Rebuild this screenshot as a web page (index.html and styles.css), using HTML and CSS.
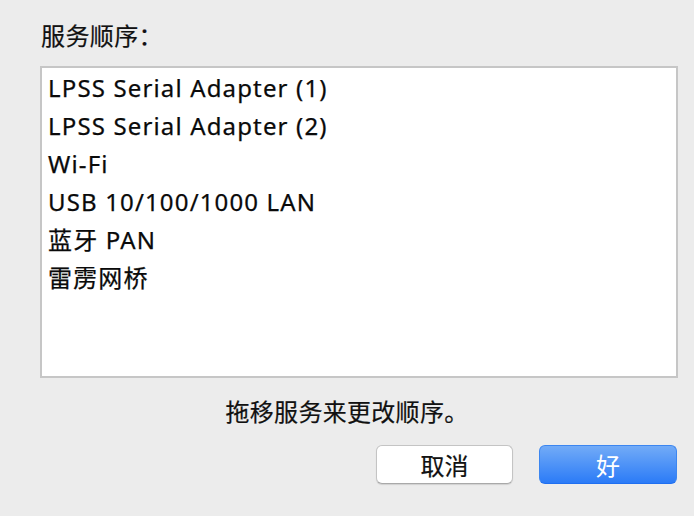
FILE: index.html
```html
<!DOCTYPE html>
<html lang="zh-CN">
<head>
<meta charset="utf-8">
<title>服务顺序</title>
<link rel="stylesheet" href="styles.css">
</head>
<body>
<div class="dialog">
  <div class="title">服务顺序：</div>
  <ul class="list">
    <li>LPSS Serial Adapter (1)</li>
    <li>LPSS Serial Adapter (2)</li>
    <li>Wi-Fi</li>
    <li>USB 10/100/1000 LAN</li>
    <li>蓝牙 PAN</li>
    <li>雷雳网桥</li>
  </ul>
  <div class="hint">拖移服务来更改顺序。</div>
  <div class="buttons">
    <button class="btn btn-cancel">取消</button>
    <button class="btn btn-ok">好</button>
  </div>
</div>
</body>
</html>
```

FILE: styles.css
```css
html, body {
  margin: 0;
  padding: 0;
  background: #ececec;
}
body {
  width: 694px;
  height: 516px;
  overflow: hidden;
  font-family: "Noto Sans", "Noto Sans CJK SC", sans-serif;
  color: #111;
}
.dialog {
  padding: 24px 16px 0 40px;
  display: flex;
  flex-direction: column;
}
.title {
  font-size: 24px;
  line-height: 24px;
  height: 24px;
  margin-left: 1px;
  letter-spacing: 0.4px;
  color: #111;
  -webkit-text-stroke: 0.2px #111;
}
.list {
  list-style: none;
  margin: 18px 0 0 0;
  padding: 1px 0 0 6px;
  height: 307px;
  background: #fff;
  border: 2px solid #c6c6c6;
  font-size: 24px;
  line-height: 38px;
  letter-spacing: 1.15px;
  color: #0a0a0a;
  -webkit-text-stroke: 0.25px #0a0a0a;
  box-sizing: content-box;
}
.list li {
  height: 38px;
  white-space: nowrap;
}
.hint {
  margin-top: 22px;
  font-size: 24px;
  line-height: 24px;
  text-align: center;
  padding-right: 24px;
  letter-spacing: 0.3px;
  color: #111;
  -webkit-text-stroke: 0.2px #111;
}
.buttons {
  margin-top: 21px;
  display: flex;
  justify-content: flex-end;
  gap: 26px;
  padding-right: 1px;
}
.btn {
  font-family: "Noto Sans CJK SC", sans-serif;
  font-size: 24px;
  line-height: 24px;
  height: 39px;
  padding: 0;
  border-radius: 6px;
  box-sizing: border-box;
}
.btn-cancel {
  width: 137px;
  background: #fff;
  color: #111;
  border: 1px solid #c4c4c4;
  border-bottom-color: #a9a9a9;
  box-shadow: 0 1px 1px rgba(0, 0, 0, 0.12);
  -webkit-text-stroke: 0.2px #111;
}
.btn-ok {
  width: 138px;
  color: #fff;
  border: 1px solid #3c86f0;
  border-bottom-color: #1f6ff0;
  background: linear-gradient(#72abf7, #2b7bf7);
}
```
